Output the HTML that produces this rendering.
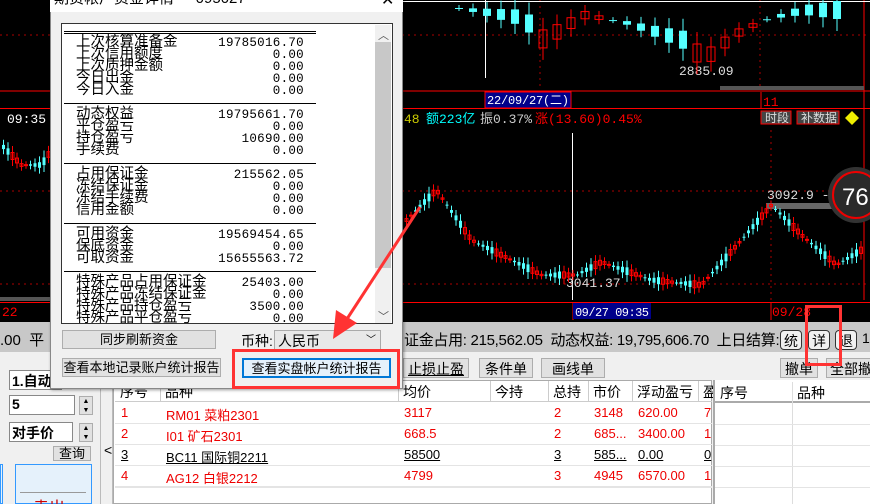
<!DOCTYPE html>
<html><head><meta charset="utf-8">
<style>
*{margin:0;padding:0;box-sizing:border-box}
html,body{width:870px;height:504px;overflow:hidden}
body{position:relative;background:#f0f0f0;font-family:"Liberation Sans","Noto Sans CJK SC",sans-serif;font-size:12px}
.a{position:absolute;white-space:nowrap}
.btn{position:absolute;background:#e1e1e1;border:1px solid #adadad;text-align:center;font-size:13px;color:#000}
.mono{font-family:"Liberation Mono","Noto Sans CJK SC",monospace}
</style></head><body>
<svg class="a" style="left:0;top:0" width="870" height="322" id="ch">
<rect width="870" height="322" fill="#000"/>
<g stroke="#a00" stroke-dasharray="2,4" stroke-width="1">
<line x1="0" y1="35" x2="870" y2="35"/><line x1="0" y1="191" x2="870" y2="191"/><line x1="0" y1="284" x2="870" y2="284"/>
<line x1="540" y1="0" x2="540" y2="90"/><line x1="760" y1="0" x2="760" y2="90"/><line x1="771" y1="130" x2="771" y2="300"/>
</g>
<g stroke="#f00" stroke-width="1">
<line x1="0" y1="91" x2="870" y2="91"/><line x1="0" y1="108.5" x2="870" y2="108.5"/><line x1="0" y1="302.5" x2="870" y2="302.5"/>
<line x1="864" y1="0" x2="864" y2="300"/><line x1="761" y1="92" x2="761" y2="108"/><line x1="573" y1="303" x2="573" y2="320"/><line x1="771" y1="303" x2="771" y2="320"/>
</g>
<line x1="400" y1="1.5" x2="870" y2="1.5" stroke="#fff"/>
<line x1="485.5" y1="0" x2="485.5" y2="78" stroke="#fff"/>
<line x1="572.5" y1="133" x2="572.5" y2="300" stroke="#fff"/>
<rect x="720" y="86" width="144" height="4" fill="#555"/>
<rect x="0" y="297" width="72" height="4" fill="#555"/>
<rect x="766" y="203" width="70" height="6" fill="#666"/>
<rect x="485" y="92" width="86" height="16" fill="#00008b" stroke="#f00"/>
<text x="487" y="104" fill="#fff" font-size="12" textLength="82" font-family="Liberation Mono,Noto Sans CJK SC">22/09/27(二)</text>
<text x="763" y="106" fill="#f00" font-size="13" font-family="Liberation Mono">11</text>
<rect x="573" y="303" width="78" height="16" fill="#00008b"/>
<text x="575" y="316" fill="#fff" font-size="12" textLength="74" font-family="Liberation Mono">09/27 09:35</text>
<text x="772" y="316" fill="#f00" font-size="13" font-family="Liberation Mono">09/28</text>
<text x="2" y="316" fill="#f00" font-size="13" font-family="Liberation Mono">22</text>
<text x="404" y="123" fill="#cc0" font-size="13" font-family="Liberation Mono">48</text>
<text x="426" y="123" fill="#0ff" font-size="13" font-family="Liberation Mono,Noto Sans CJK SC">额223亿</text>
<text x="480" y="123" fill="#ccc" font-size="13" font-family="Liberation Mono,Noto Sans CJK SC">振0.37%</text>
<text x="535" y="123" fill="#f00" font-size="13" font-family="Liberation Mono,Noto Sans CJK SC">涨(13.60)0.45%</text>
<text x="7" y="123" fill="#fff" font-size="13" font-family="Liberation Mono">09:35</text>
<text x="679" y="75" fill="#ddd" font-size="13" font-family="Liberation Mono">2885.09</text>
<text x="767" y="199" fill="#ddd" font-size="13" font-family="Liberation Mono">3092.9 - 3</text>
<text x="566" y="287" fill="#ddd" font-size="13" font-family="Liberation Mono">3041.37</text>
<rect x="761" y="111" width="30" height="13" fill="#444" stroke="#f00"/>
<text x="765" y="122" fill="#ddd" font-size="12">时段</text>
<rect x="797" y="111" width="42" height="13" fill="#444" stroke="#f00"/>
<text x="801" y="122" fill="#ddd" font-size="12">补数据</text>
<polygon points="852,111 859,118 852,125 845,118" fill="#ee0"/>
<circle cx="856" cy="195" r="28" fill="#333"/>
<circle cx="856" cy="195" r="23" fill="#2a2a2a" stroke="#e00" stroke-width="2"/>
<text x="842" y="205" fill="#fff" font-size="24">76</text>
<g id="cd"></g>
</svg>

<div class="a" style="left:0;top:322px;width:870px;height:30px;background:#c8c8c8"></div>
<div class="a" style="left:0;top:329px;font-size:15px">.00 &nbsp;平</div>
<div class="a" style="left:404px;top:329px;font-size:15px;letter-spacing:-0.3px">证金占用: 215,562.05 &nbsp;动态权益: 19,795,606.70 &nbsp;上日结算: 1</div>
<div class="btn" style="left:780px;top:330px;width:22px;height:20px;border-radius:4px;background:#f0f0f0;border-color:#333;font-size:14px">统</div>
<div class="btn" style="left:808px;top:330px;width:22px;height:20px;border-radius:4px;background:#f0f0f0;border-color:#333;font-size:14px">详</div>
<div class="btn" style="left:835px;top:330px;width:22px;height:20px;border-radius:4px;background:#f0f0f0;border-color:#333;font-size:14px">退</div>
<div class="a" style="left:862px;top:330px;font-size:14px">1</div>

<div class="btn" style="left:403px;top:358px;width:66px;height:20px;font-size:14px;text-decoration:underline">止损止盈</div>
<div class="btn" style="left:479px;top:358px;width:54px;height:20px;font-size:14px">条件单</div>
<div class="btn" style="left:541px;top:358px;width:64px;height:20px;font-size:14px">画线单</div>
<div class="btn" style="left:780px;top:358px;width:38px;height:20px;font-size:14px">撤单</div>
<div class="btn" style="left:826px;top:358px;width:50px;height:20px;font-size:14px">全部撤</div>

<div class="a" style="left:113px;top:380px;width:599px;height:124px;background:#fff;border:1px solid #aaa"></div>
<div class="a" style="left:115px;top:381px;width:597px;height:21px;border-bottom:1px solid #ccc"></div>
<div id="tb"></div>
<div class="a" style="left:713px;top:380px;width:157px;height:124px;background:#fff;border-left:2px solid #aaa"></div>
<div class="a" style="left:715px;top:382px;width:155px;height:21px;border-bottom:2px solid #aaa"></div>
<div class="a" style="left:792px;top:382px;width:1px;height:122px;background:#ddd"></div>
<div class="a" style="left:720px;top:383px;font-size:14px">序号</div>
<div class="a" style="left:797px;top:383px;font-size:14px">品种</div>
<div class="a" style="left:715px;top:424px;width:155px;height:1px;background:#e4e4e4"></div>
<div class="a" style="left:715px;top:445px;width:155px;height:1px;background:#e4e4e4"></div>
<div class="a" style="left:715px;top:466px;width:155px;height:1px;background:#e4e4e4"></div>
<div class="a" style="left:715px;top:487px;width:155px;height:1px;background:#e4e4e4"></div>

<div class="a" style="left:100px;top:352px;width:13px;height:152px;background:#f0f0f0;border-left:1px solid #bbb;border-right:1px solid #bbb"></div>
<div class="a" style="left:104px;top:442px;font-size:14px">&lt;</div>
<div class="a" style="left:9px;top:370px;width:53px;height:20px;background:#fff;border:1px solid #888;font-size:14px;font-weight:bold;padding-left:2px">1.自动</div>
<div class="a" style="left:9px;top:395px;width:66px;height:20px;background:#fff;border:1px solid #888;font-size:14px;font-weight:bold;padding-left:2px">5</div>
<div class="a" style="left:9px;top:422px;width:64px;height:20px;background:#fff;border:1px solid #888;font-size:14px;font-weight:bold;padding-left:2px">对手价</div>
<div class="btn" style="left:79px;top:396px;width:14px;height:19px;font-size:7px;line-height:9px">▲<br>▼</div>
<div class="btn" style="left:79px;top:423px;width:14px;height:19px;font-size:7px;line-height:9px">▲<br>▼</div>
<div class="btn" style="left:53px;top:446px;width:38px;height:15px;font-size:13px;line-height:13px">查询</div>
<div class="a" style="left:0;top:464px;width:3px;height:40px;border:1px solid #39f;background:#e5f1fb"></div>
<div class="a" style="left:15px;top:464px;width:77px;height:40px;border:1px solid #39f;background:#e5f1fb"></div>
<div class="a" style="left:20px;top:492px;width:66px;height:1px;background:#999"></div>
<div class="a" style="left:33px;top:494px;font-size:16px;color:#c00;height:10px;overflow:hidden">卖出</div>

<div class="a" style="left:50px;top:0;width:353px;height:389px;background:#f0f0f0;border:1px solid #888;border-top:none;box-shadow:1px 1px 3px rgba(0,0,0,.4)"></div>
<div class="a" style="left:50px;top:0;width:353px;height:12px;background:#fff"></div>
<div class="a" style="left:54px;top:-13px;font-size:15px;color:#000">期货帐户资金详情 &nbsp;- &nbsp;095027</div>
<div class="a" style="left:381px;top:-10px;font-size:16px">✕</div>
<div class="a" style="left:61px;top:23px;width:332px;height:301px;background:#fff;border:1px solid #333"></div>
<div class="a" style="left:375px;top:25px;width:16px;height:298px;background:#f0f0f0"></div>
<div class="a" style="left:375px;top:42px;width:16px;height:226px;background:#c8c8c8"></div>
<div class="a" style="left:378px;top:27px;font-size:11px;color:#555">︿</div>
<div class="a" style="left:378px;top:308px;font-size:11px;color:#555">﹀</div>
<div class="a" style="left:62px;top:24px;width:312px;height:299px;overflow:hidden" id="dlw"><div id="dl" style="position:relative;left:-62px;top:-24px"></div></div>
<div class="btn" style="left:62px;top:330px;width:154px;height:19px;line-height:17px">同步刷新资金</div>
<div class="a" style="left:241px;top:331px;font-size:14px">币种:</div>
<div class="a" style="left:274px;top:330px;width:107px;height:20px;background:#e8e8e8;border:1px solid #aaa;font-size:14px;padding-left:3px">人民币<span style="position:absolute;right:4px;top:0;font-size:10px">﹀</span></div>
<div class="btn" style="left:62px;top:358px;width:159px;height:19px;line-height:17px">查看本地记录账户统计报告</div>
<div class="btn" style="left:242px;top:358px;width:149px;height:20px;line-height:18px;border:2px solid #0078d7;background:#e5f1fb">查看实盘帐户统计报告</div>

<div class="a" style="left:232px;top:349px;width:168px;height:40px;border:3px solid #f33"></div>
<div class="a" style="left:805px;top:305px;width:37px;height:61px;border:3px solid #f33"></div>
<svg class="a" style="left:0;top:0" width="870" height="504">
<line x1="420" y1="207" x2="345" y2="322" stroke="#f33" stroke-width="3"/>
<polygon points="333,339 336,310 357,323" fill="#f33"/>
</svg>

<script>
var rows=[[44,"上次核算准备金","19785016.70"],[56,"上次信用额度","0.00"],[68,"上次质押金额","0.00"],[80,"今日出金","0.00"],[92,"今日入金","0.00"],
[116,"动态权益","19795661.70"],[128,"平仓盈亏","0.00"],[140,"持仓盈亏","10690.00"],[152,"手续费","0.00"],
[176,"占用保证金","215562.05"],[188,"冻结保证金","0.00"],[200,"冻结手续费","0.00"],[212,"信用金额","0.00"],
[236,"可用资金","19569454.65"],[248,"保底资金","0.00"],[260,"可取资金","15655563.72"],
[284,"特殊产品占用保证金","25403.00"],[296,"特殊产品冻结保证金","0.00"],[308,"特殊产品持仓盈亏","3500.00"],[320,"特殊产品平仓盈亏","0.00"]];
var h='';
rows.forEach(function(r){
 h+='<div class="a" style="left:76px;top:'+(r[0]-10)+'px;font-size:14.5px;line-height:16px">'+r[1]+'</div>';
 h+='<div class="a mono" style="left:190px;width:114px;text-align:right;top:'+(r[0]-8)+'px;font-size:12.5px;letter-spacing:0.3px">'+r[2]+'</div>';
});
[[31,1],[33,1],[103,1],[163,1],[223,1],[271,1]].forEach(function(l){h+='<div class="a" style="left:64px;top:'+l[0]+'px;width:252px;height:1px;background:#000"></div>';});
document.getElementById('dl').innerHTML=h;
var cols=[115,160,398,490,548,588,632,698];
var hd=["序号","品种","均价","今持","总持","市价","浮动盈亏","盈"];
var data=[["1","RM01 菜粕2301","3117","","2","3148","620.00","7","#e00"],["2","I01 矿石2301","668.5","","2","685...","3400.00","1","#e00"],["3","BC11 国际铜2211","58500","","3","585...","0.00","0","#000"],["4","AG12 白银2212","4799","","3","4945","6570.00","1","#e00"]];
var t='';
hd.forEach(function(s,i){t+='<div class="a" style="left:'+(cols[i]+5)+'px;top:382px;font-size:14px">'+s+'</div>';if(i>0)t+='<div class="a" style="left:'+cols[i]+'px;top:381px;width:1px;height:21px;background:#ccc"></div>';});
data.forEach(function(r,j){var y=403+j*21;t+='<div class="a" style="left:115px;top:'+(y+20)+'px;width:597px;height:1px;background:#e4e4e4"></div>';
 for(var i=0;i<8;i++){t+='<div class="a" style="left:'+(cols[i]+6)+'px;top:'+(y+2)+'px;font-size:13px;color:'+r[8]+(r[8]=="#000"&&r[i]?';text-decoration:underline':'')+'">'+r[i]+'</div>';}});
t+='<div class="a" style="left:115px;top:487px;width:597px;height:1px;background:#e4e4e4"></div>';
document.getElementById('tb').innerHTML=t;
var g='';
function cd(x,o,c,hi,lo,w){var up=c<o;var col=up?'#f00':'#5ff';var top=Math.min(o,c),bh=Math.max(1,Math.abs(o-c));
 g+='<line x1="'+(x+w/2)+'" y1="'+hi+'" x2="'+(x+w/2)+'" y2="'+lo+'" stroke="'+col+'"/>';
 g+='<rect x="'+x+'" y="'+top+'" width="'+w+'" height="'+bh+'" '+(up?'fill="none" stroke="#f00"':'fill="#5ff"')+'/>';}
function path(pts,x0,x1,step,w,amp){var p=pts;for(var x=x0;x<x1;x+=step){var k=0;while(k<p.length-2&&p[k+1][0]<x)k++;var a=p[k],b=p[k+1];var y=a[1]+(b[1]-a[1])*(x-a[0])/(b[0]-a[0]);
 var d=((x*37)%11-5)*amp/5;cd(x,y-d/2,y+d/2,y-Math.abs(d)-3,y+Math.abs(d)+3,w);}}
path([[455,8],[520,18],[540,40],[580,15],[620,22],[680,40],[700,60],[730,35],[760,20],[800,10],[845,10]],455,845,14,8,18);
path([[405,220],[435,190],[470,240],[540,275],[575,275],[600,262],[650,280],[700,285],[740,240],[770,205],[800,235],[835,265],[860,250]],405,860,4.5,3,7);
path([[0,145],[20,165],[40,165],[50,150]],2,50,4.5,3,7);
document.getElementById('cd').innerHTML=g;
</script>
</body></html>
